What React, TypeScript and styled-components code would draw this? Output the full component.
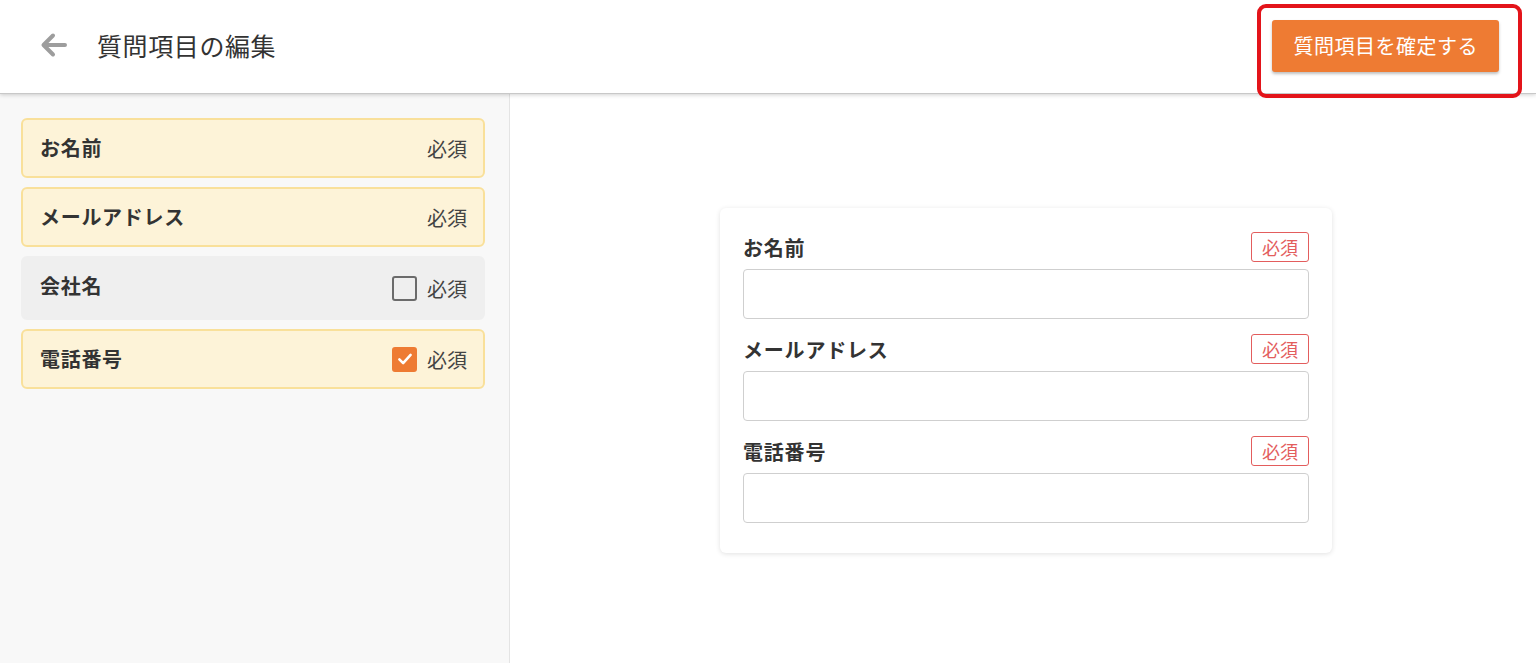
import * as React from 'react';
import styled, { createGlobalStyle } from 'styled-components';

const FONT = `"Noto Sans CJK JP", "Noto Sans", sans-serif`;
const ORANGE = '#ee7b33';
const BADGE_RED = '#e35d5d';

const GlobalStyle = createGlobalStyle`
  html, body {
    margin: 0;
    padding: 0;
    height: 100%;
  }
  body {
    font-family: ${FONT};
    color: #333;
    background: #fff;
  }
  #root {
    height: 100%;
  }
`;

const Page = styled.div`
  display: flex;
  flex-direction: column;
  height: 663px;
  overflow: hidden;
`;

const Header = styled.header`
  position: relative;
  z-index: 2;
  flex: 0 0 93px;
  display: flex;
  align-items: center;
  justify-content: space-between;
  padding: 0 37px 0 40px;
  background: #fff;
  box-shadow: 0 1px 0 #c8c8c8, 0 2px 4px rgba(0, 0, 0, 0.18);
`;

const TitleGroup = styled.div`
  display: flex;
  align-items: center;
  gap: 29px;
  margin-top: -4px;
`;

const BackButton = styled.button`
  display: flex;
  align-items: center;
  justify-content: center;
  width: 28px;
  height: 28px;
  padding: 0;
  border: none;
  background: none;
  cursor: pointer;
`;

const Title = styled.h1`
  margin: 0;
  font-size: 25px;
  font-weight: 400;
  color: #333;
  letter-spacing: 0.6px;
`;

const ConfirmWrap = styled.div`
  position: relative;
  margin-top: -2px;
`;

const ConfirmButton = styled.button`
  height: 52px;
  padding: 0 21px 0 22px;
  border: none;
  border-radius: 3px;
  background: ${ORANGE};
  color: #fff;
  font-family: ${FONT};
  font-size: 20px;
  letter-spacing: 0.5px;
  box-shadow: 0 2px 3px rgba(0, 0, 0, 0.25);
  cursor: pointer;
`;

const Highlight = styled.div`
  position: absolute;
  top: -16px;
  left: -15px;
  right: -23px;
  bottom: -26px;
  border: 4px solid #e3141a;
  border-radius: 9px;
  pointer-events: none;
`;

const Body = styled.div`
  flex: 1;
  display: flex;
  min-height: 0;
`;

const Sidebar = styled.aside`
  flex: 0 0 510px;
  display: flex;
  flex-direction: column;
  gap: 9px;
  padding: 25px 24px 0 21px;
  box-sizing: border-box;
  background: #f8f8f8;
  border-right: 1px solid #e4e4e4;
`;

const Item = styled.div<{ $muted?: boolean; $tall?: boolean }>`
  display: flex;
  align-items: center;
  justify-content: space-between;
  height: ${(p) => (p.$tall ? 64 : 60)}px;
  padding: 0 16px 0 17px;
  box-sizing: border-box;
  border-radius: 6px;
  background: ${(p) => (p.$muted ? '#efefef' : '#fdf3d8')};
  border: 2px solid ${(p) => (p.$muted ? '#efefef' : '#f9e09a')};
`;

const ItemName = styled.span<{ $lifted?: boolean }>`
  font-size: 20px;
  font-weight: 700;
  color: #333;
  letter-spacing: 0.7px;
  margin-top: ${(p) => (p.$lifted ? -6 : -2)}px;
`;

const ItemRequired = styled.span`
  display: flex;
  align-items: center;
  gap: 10px;
  font-size: 20px;
  color: #444;
`;

const Check = styled.span<{ $checked?: boolean }>`
  display: flex;
  align-items: center;
  justify-content: center;
  width: 25px;
  height: 25px;
  box-sizing: border-box;
  border-radius: 3px;
  border: 2.5px solid ${(p) => (p.$checked ? ORANGE : '#6b6b6b')};
  background: ${(p) => (p.$checked ? ORANGE : 'transparent')};
`;

const Preview = styled.main`
  flex: 1;
  display: flex;
  align-items: center;
  justify-content: center;
  padding: 5px 0 0 6px;
  background: #fff;
`;

const Card = styled.section`
  width: 612px;
  box-sizing: border-box;
  padding: 23px 23px 30px;
  display: flex;
  flex-direction: column;
  gap: 14px;
  border-radius: 6px;
  background: #fff;
  box-shadow: 0 1px 5px rgba(0, 0, 0, 0.12);
`;

const Field = styled.div`
  display: flex;
  flex-direction: column;
  gap: 7px;
`;

const FieldHead = styled.div`
  display: flex;
  align-items: center;
  justify-content: space-between;
`;

const FieldLabel = styled.label`
  font-size: 20px;
  font-weight: 700;
  color: #333;
  letter-spacing: 0.8px;
  margin-top: 2px;
`;

const Badge = styled.span`
  display: flex;
  align-items: center;
  justify-content: center;
  width: 58px;
  height: 30px;
  box-sizing: border-box;
  border: 1.5px solid ${BADGE_RED};
  border-radius: 3px;
  color: ${BADGE_RED};
  font-size: 18px;
`;

const Input = styled.input`
  height: 50px;
  box-sizing: border-box;
  border: 1.5px solid #cfcfcf;
  border-radius: 4px;
  padding: 0 12px;
  font-family: ${FONT};
  font-size: 16px;
  background: #fff;
  outline: none;
`;

const ArrowBack = () => (
  <svg width="28" height="26" viewBox="0 0 28 26" fill="none" stroke="#9d9d9d" strokeWidth="4" strokeLinecap="round" strokeLinejoin="round">
    <path d="M25 13H4M13 3.5L3.5 13l9.5 9.5" />
  </svg>
);

const Tick = () => (
  <svg width="18" height="18" viewBox="0 0 24 24" fill="none" stroke="#fff" strokeWidth="3.4" strokeLinecap="round" strokeLinejoin="round">
    <path d="M4.5 12.5l5 5L19.5 6.5" />
  </svg>
);

interface Question {
  name: string;
  locked: boolean;
  required: boolean;
}

const questions: Question[] = [
  { name: 'お名前', locked: true, required: true },
  { name: 'メールアドレス', locked: true, required: true },
  { name: '会社名', locked: false, required: false },
  { name: '電話番号', locked: false, required: true },
];

const App: React.FunctionComponent = () => {
  return (
    <>
      <GlobalStyle />
      <Page>
        <Header>
          <TitleGroup>
            <BackButton type="button" aria-label="戻る">
              <ArrowBack />
            </BackButton>
            <Title>質問項目の編集</Title>
          </TitleGroup>
          <ConfirmWrap>
            <ConfirmButton type="button">質問項目を確定する</ConfirmButton>
            <Highlight />
          </ConfirmWrap>
        </Header>
        <Body>
          <Sidebar>
            {questions.map((q) => {
              const tall = !q.locked && !q.required;
              return (
                <Item key={q.name} $muted={!q.required} $tall={tall}>
                  <ItemName $lifted={tall}>{q.name}</ItemName>
                  <ItemRequired>
                    {!q.locked && (
                      <Check $checked={q.required}>{q.required && <Tick />}</Check>
                    )}
                    必須
                  </ItemRequired>
                </Item>
              );
            })}
          </Sidebar>
          <Preview>
            <Card>
              {questions
                .filter((q) => q.required)
                .map((q) => (
                  <Field key={q.name}>
                    <FieldHead>
                      <FieldLabel>{q.name}</FieldLabel>
                      <Badge>必須</Badge>
                    </FieldHead>
                    <Input type="text" />
                  </Field>
                ))}
            </Card>
          </Preview>
        </Body>
      </Page>
    </>
  );
};

export default App;
